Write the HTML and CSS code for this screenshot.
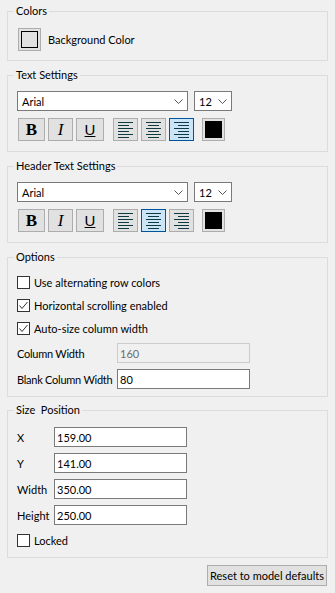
FILE: index.html
```html
<!DOCTYPE html>
<html>
<head lang="en">
<meta charset="UTF-8">
<title>Table Properties</title>
<link rel="stylesheet" href="styles.css">
</head>
<body>
<div class="panel">
    <fieldset class="group group-colors">
        <legend>Colors</legend>
        <div class="color-row">
            <button class="swatch-btn"><span class="swatch swatch-light"></span></button>
            <span>Background Color</span>
        </div>
    </fieldset>

    <fieldset class="group">
        <legend>Text Settings</legend>
        <div class="font-row">
            <div class="select select-font"><span>Arial</span><svg width="9" height="5"><polyline points="0.5,0.5 4.5,4.5 8.5,0.5"/></svg></div>
            <div class="select select-size"><span>12</span><svg width="9" height="5"><polyline points="0.5,0.5 4.5,4.5 8.5,0.5"/></svg></div>
        </div>
        <div class="tool-row">
            <button class="tool tool-b">B</button>
            <button class="tool tool-i">I</button>
            <button class="tool tool-u">U</button>
            <button class="tool tool-align"><svg width="15" height="16"><path d="M0 0.5h15M0 3.5h11M0 6.5h15M0 9.5h11M0 12.5h15M0 15.5h11"/></svg></button>
            <button class="tool tool-align"><svg width="15" height="16"><path d="M0 0.5h15M2 3.5h11M0 6.5h15M2 9.5h11M0 12.5h15M2 15.5h11"/></svg></button>
            <button class="tool tool-align active"><svg width="15" height="16"><path d="M0 0.5h15M4 3.5h11M0 6.5h15M4 9.5h11M0 12.5h15M4 15.5h11"/></svg></button>
            <button class="swatch-btn color-btn"><span class="swatch swatch-dark"></span></button>
        </div>
    </fieldset>

    <fieldset class="group">
        <legend>Header Text Settings</legend>
        <div class="font-row">
            <div class="select select-font"><span>Arial</span><svg width="9" height="5"><polyline points="0.5,0.5 4.5,4.5 8.5,0.5"/></svg></div>
            <div class="select select-size"><span>12</span><svg width="9" height="5"><polyline points="0.5,0.5 4.5,4.5 8.5,0.5"/></svg></div>
        </div>
        <div class="tool-row">
            <button class="tool tool-b">B</button>
            <button class="tool tool-i">I</button>
            <button class="tool tool-u">U</button>
            <button class="tool tool-align"><svg width="15" height="16"><path d="M0 0.5h15M0 3.5h11M0 6.5h15M0 9.5h11M0 12.5h15M0 15.5h11"/></svg></button>
            <button class="tool tool-align active"><svg width="15" height="16"><path d="M0 0.5h15M2 3.5h11M0 6.5h15M2 9.5h11M0 12.5h15M2 15.5h11"/></svg></button>
            <button class="tool tool-align"><svg width="15" height="16"><path d="M0 0.5h15M4 3.5h11M0 6.5h15M4 9.5h11M0 12.5h15M4 15.5h11"/></svg></button>
            <button class="swatch-btn color-btn"><span class="swatch swatch-dark"></span></button>
        </div>
    </fieldset>

    <fieldset class="group group-options">
        <legend>Options</legend>
        <div class="rows">
            <label class="check-row"><span class="check"></span>Use alternating row colors</label>
            <label class="check-row"><span class="check"><svg width="11" height="11"><polyline points="1.5,5.5 4,8.5 9.5,2"/></svg></span>Horizontal scrolling enabled</label>
            <label class="check-row"><span class="check"><svg width="11" height="11"><polyline points="1.5,5.5 4,8.5 9.5,2"/></svg></span>Auto-size column width</label>
            <div class="field-row"><span class="field-label wide">Column Width</span><input class="text-input" value="160" disabled></div>
            <div class="field-row"><span class="field-label wide">Blank Column Width</span><input class="text-input" value="80"></div>
        </div>
    </fieldset>

    <fieldset class="group group-size">
        <legend>Size&nbsp; Position</legend>
        <div class="rows">
            <div class="field-row"><span class="field-label">X</span><input class="text-input" value="159.00"></div>
            <div class="field-row"><span class="field-label">Y</span><input class="text-input" value="141.00"></div>
            <div class="field-row"><span class="field-label">Width</span><input class="text-input" value="350.00"></div>
            <div class="field-row"><span class="field-label">Height</span><input class="text-input" value="250.00"></div>
            <label class="check-row locked"><span class="check"></span>Locked</label>
        </div>
    </fieldset>

    <div class="footer">
        <button class="reset-btn">Reset to model defaults</button>
    </div>
</div>
</body>
</html>
```

FILE: styles.css
```css
*{box-sizing:border-box;}
body{margin:0;background:#f0f0f0;font-family:Lato,"Liberation Sans",sans-serif;font-size:11px;color:#000;white-space:nowrap;}
button,input{font-family:inherit;font-size:inherit;color:inherit;margin:0;}

.panel{padding:4px 7px 0;}

/* group boxes */
.group{margin:0 0 7px;padding:9px 9px 10px;border:1px solid #dcdcdc;min-width:0;}
.group legend{padding:0 2px;margin-left:-3px;line-height:14px;}
.group-colors{padding-top:10px;padding-bottom:9px;}
.group-options{padding-top:10px;padding-bottom:7px;margin-bottom:6px;}
.group-size{padding-top:10px;padding-bottom:8px;}

/* colour swatches */
.color-row{display:flex;align-items:center;gap:7px;height:23px;margin-left:1px;}
.swatch-btn{width:23px;height:23px;padding:0;background:#e1e1e1;border:1px solid #adadad;display:flex;align-items:center;justify-content:center;}
.swatch{display:block;width:17px;height:17px;}
.swatch-light{background:#e1e1e1;border:1px solid #000;}
.swatch-dark{background:#000;}

/* font pickers */
.font-row{display:flex;gap:6px;height:20px;}
.select{display:flex;align-items:center;justify-content:space-between;height:20px;background:#fff;border:1px solid #7a7a7a;padding:0 4px 0 4px;}
.select-font{width:171px;}
.select-size{width:38px;}
.select svg{fill:none;stroke:#555;stroke-width:1;}

/* formatting buttons */
.tool-row{display:flex;align-items:center;margin:7px 0 0 1px;height:23px;}
.tool{height:23px;padding:0;background:#e1e1e1;border:1px solid #adadad;display:flex;align-items:center;justify-content:center;margin-right:3px;}
.tool-b{width:27px;font-family:"Liberation Serif",serif;font-weight:bold;font-size:17px;}
.tool-i{width:25px;font-family:"Liberation Serif",serif;font-style:italic;font-size:17px;}
.tool-u{width:28px;font-family:"Liberation Sans",sans-serif;font-size:15px;text-decoration:underline;margin-right:9px;}
.tool-align{width:25px;}
.tool-align svg{stroke:#0f3a40;stroke-width:1;}
.tool-align.active{background:#cce4f7;border-color:#005499;}
.color-btn{margin-left:5px;}

/* option rows */
.rows{display:flex;flex-direction:column;gap:6px;}
.check-row{display:flex;align-items:center;gap:4px;height:17px;}
.locked{margin-top:1px;}
.check{width:13px;height:13px;background:#fff;border:1px solid #333;display:flex;align-items:center;justify-content:center;}
.check svg{fill:none;stroke:#333;stroke-width:1;}
.field-row{display:flex;align-items:center;height:20px;}
.field-label{width:37px;}
.field-label.wide{width:100px;letter-spacing:-0.25px;}
.text-input{width:133px;height:20px;border:1px solid #7a7a7a;background:#fff;padding:0 2px;outline:none;}
.text-input:disabled{background:#f0f0f0;border-color:#cccccc;color:#6d6d6d;}

.footer{display:flex;justify-content:flex-end;padding-right:1px;}
.reset-btn{width:120px;height:21px;padding:0;background:#e1e1e1;border:1px solid #adadad;}
```
